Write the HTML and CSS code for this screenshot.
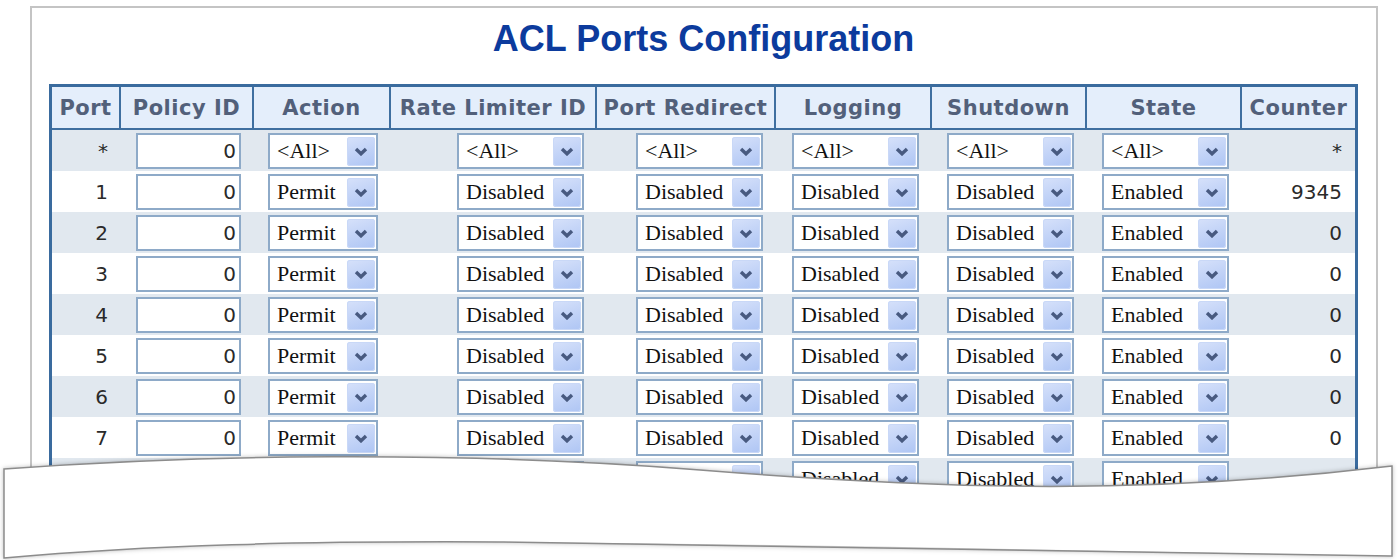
FILE: index.html
```html
<!DOCTYPE html>
<html lang="en">
<head>
    <meta charset="UTF-8">
    <meta name="viewport" content="width=device-width, initial-scale=1.0">
    <title>ACL Ports Configuration</title>
    <link rel="stylesheet" href="styles.css">
</head>
<body>
    <div class="frame">
        <h1 class="title">ACL Ports Configuration</h1>

        <table class="acl">
            <colgroup>
                <col style="width: 69px">
                <col style="width: 133px">
                <col style="width: 137px">
                <col style="width: 206px">
                <col style="width: 179px">
                <col style="width: 156px">
                <col style="width: 155px">
                <col style="width: 155px">
                <col style="width: 113px">
            </colgroup>
            <thead>
                <tr>
                    <th>Port</th>
                    <th>Policy ID</th>
                    <th>Action</th>
                    <th>Rate Limiter ID</th>
                    <th>Port Redirect</th>
                    <th>Logging</th>
                    <th>Shutdown</th>
                    <th>State</th>
                    <th>Counter</th>
                </tr>
            </thead>
            <tbody id="aclBody"></tbody>
        </table>
    </div>

    <!-- torn page edge laid over the rest of the list -->
    <svg class="tear" viewBox="0 440 1400 120" width="1400" height="120" aria-hidden="true">
        <path d="M0,470 L4,469 C200,455 450,450 700,470 S1150,495 1392,466 L1400,466 L1400,560 L0,560 Z" fill="#fff"/>
        <path class="edge" d="M4,469 C200,455 450,450 700,470 S1150,495 1392,466 L1392,556 C1100,551 800,544 500,542 C300,541 150,545 4,558 Z"
              fill="#fff" stroke="#8c8c8c" stroke-width="1.5"/>
    </svg>

    <script>
        document.addEventListener("DOMContentLoaded", function () {
            const body = document.getElementById("aclBody");
            const counters = [9345, 0, 0, 0, 0, 0, 0, 0];

            const rates = ["Disabled"];
            const redirects = ["Disabled"];
            for (let i = 1; i <= 16; i++) {
                rates.push(String(i));
                redirects.push("Port " + i);
            }

            const lists = {
                action: ["Permit", "Deny", "Filter"],
                rate: rates,
                redirect: redirects,
                logging: ["Disabled", "Enabled"],
                shutdown: ["Disabled", "Enabled"],
                state: ["Enabled", "Disabled"]
            };

            function esc(s) {
                return s.replace(/</g, "&lt;").replace(/>/g, "&gt;");
            }

            function dropdown(options, extra) {
                const opts = options.map(o => `<option>${esc(o)}</option>`).join("");
                return `<span class="sel ${extra || ""}"><select>${opts}</select>` +
                    `<span class="btn"><svg width="14" height="9" viewBox="0 0 14 9">` +
                    `<path d="M2 2 L7 6.8 L12 2" fill="none" stroke="#485a80" stroke-width="3.4"/></svg></span></span>`;
            }

            function row(port, counter, all) {
                const pick = list => all ? ["<All>"].concat(list) : list;
                const tr = document.createElement("tr");
                tr.innerHTML = `
                    <td>${port}</td>
                    <td><input class="num" type="text" value="0"></td>
                    <td>${dropdown(pick(lists.action), "narrow")}</td>
                    <td>${dropdown(pick(lists.rate))}</td>
                    <td>${dropdown(pick(lists.redirect))}</td>
                    <td>${dropdown(pick(lists.logging))}</td>
                    <td>${dropdown(pick(lists.shutdown))}</td>
                    <td>${dropdown(pick(lists.state))}</td>
                    <td>${counter}</td>
                `;
                body.appendChild(tr);
            }

            row("*", "*", true);
            counters.forEach(function (c, i) {
                row(i + 1, c, false);
            });
        });
    </script>
</body>
</html>
```

FILE: styles.css
```css
html, body {
    margin: 0;
    height: 560px;
    overflow: hidden;
    background-color: #fff;
}

body {
    position: relative;
    font-family: "DejaVu Sans", Verdana, sans-serif;
}

.frame {
    margin: 6px 22px 0 30px;
    border: 2px solid #c4c4c4;
    border-bottom: none;
    height: 544px;
    overflow: hidden;
    padding: 10px 18px 0 17px;
}

.title {
    margin: 0 0 24px;
    font: bold 36px/42px "Liberation Sans", Arial, sans-serif;
    color: #0c3b9d;
    text-align: center;
}

.acl {
    width: 1309px;
    table-layout: fixed;
    border-collapse: separate;
    border-spacing: 0;
    border: 3px solid #3a6b9e;
}

.acl th {
    height: 41px;
    padding: 0;
    background-color: #e4eefb;
    color: #52607a;
    font-size: 21px;
    font-weight: bold;
    letter-spacing: 0.5px;
    text-align: center;
    white-space: nowrap;
    border-right: 2px solid #3f6fa0;
    border-bottom: 2px solid #3f6fa0;
}

.acl th:last-child {
    border-right: none;
}

.acl td {
    height: 41px;
    padding: 0 13px 0 0;
    text-align: right;
    font-size: 20px;
    color: #2a2a2a;
    white-space: nowrap;
}

.acl tbody tr:nth-child(odd) {
    background-color: #e1e8ef;
}

.num {
    width: 105px;
    height: 36px;
    box-sizing: border-box;
    margin: 0;
    padding: 0 3px;
    border: 2px solid #8eaac8;
    background-color: #fff;
    font: 20px "DejaVu Sans", Verdana, sans-serif;
    color: #2a2a2a;
    text-align: right;
    vertical-align: middle;
}

.sel {
    position: relative;
    display: inline-block;
    vertical-align: middle;
}

.sel select {
    appearance: none;
    -webkit-appearance: none;
    display: block;
    width: 127px;
    height: 36px;
    box-sizing: border-box;
    margin: 0;
    padding: 0 0 0 7px;
    border: 2px solid #8eaac8;
    border-radius: 0;
    background-color: #fff;
    font: 22px "Liberation Serif", "Times New Roman", serif;
    color: #111;
}

.sel.narrow select {
    width: 110px;
}

.sel .btn {
    position: absolute;
    top: 4px;
    right: 3px;
    width: 28px;
    height: 29px;
    border-radius: 3px;
    background: linear-gradient(160deg, #d6e1fa, #aec5f4);
    box-shadow: inset 0 0 0 1px #c9d8f7;
    display: flex;
    align-items: center;
    justify-content: center;
    pointer-events: none;
}

.tear {
    position: absolute;
    left: 0;
    top: 440px;
}

.tear .edge {
    filter: drop-shadow(0 0 2px rgba(0, 0, 0, 0.25));
}
```
